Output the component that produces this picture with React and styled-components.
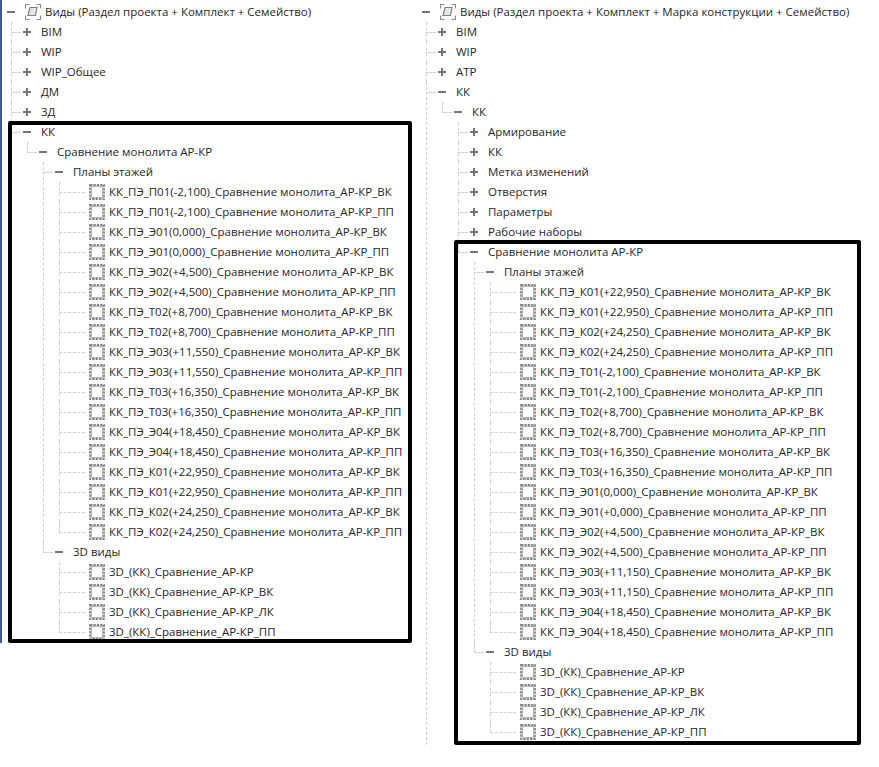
import React from 'react';
import styled, { createGlobalStyle } from 'styled-components';

const GlobalStyle = createGlobalStyle`
    html, body {
        margin: 0;
        padding: 0;
        background: #fff;
    }

    body {
        font-family: "Open Sans", "Noto Sans", sans-serif;
        font-size: 11.5px;
        color: #262626;
    }
`;

const Page = styled.div`
    display: flex;
    align-items: flex-start;
    width: 879px;
    height: 767px;
    overflow: hidden;
`;

const Column = styled.div`
    width: ${(p) => p.$width}px;
    padding: 2px 0 0 3px;
    box-sizing: border-box;
    flex-shrink: 0;
`;

const EdgeColumn = styled(Column)`
    height: 643px;
    padding-left: 1px;
    border-left: 2px solid #3d5a8a;
`;

const Branch = styled.div`
    padding-left: 16px;
`;

const Item = styled.div`
    position: relative;

    &::before {
        content: '';
        position: absolute;
        left: -8px;
        top: 0;
        height: ${(p) => p.$last ? (p.$open ? 'calc(100% + 3px)' : '11px') : '100%'};
        border-left: 1px dashed #cfcfcf;
    }
`;

const Row = styled.div`
    position: relative;
    display: flex;
    align-items: center;
    height: 20px;
    white-space: nowrap;
`;

const Connector = styled.span`
    position: absolute;
    left: -8px;
    top: 10px;
    width: ${(p) => p.$width}px;
    border-top: 1px dashed #cfcfcf;
`;

const Expander = styled.span`
    position: relative;
    width: 22px;
    height: 20px;
    flex-shrink: 0;

    &::before {
        content: '';
        position: absolute;
        left: 4px;
        top: 9px;
        width: 8px;
        height: 2px;
        background: #767676;
    }

    &::after {
        content: '';
        display: ${(p) => p.$open ? 'none' : 'block'};
        position: absolute;
        left: 7px;
        top: 6px;
        width: 2px;
        height: 8px;
        background: #767676;
    }
`;

const LeafGap = styled.span`
    width: 22px;
    flex-shrink: 0;
`;

const Label = styled.span`
    line-height: 20px;
`;

const IconSlot = styled.svg`
    display: block;
    flex-shrink: 0;
    width: 16px;
    height: 16px;
    margin-right: 4px;
`;

const Highlight = styled.div`
    position: relative;

    &::after {
        content: '';
        position: absolute;
        left: ${(p) => p.$left}px;
        top: ${(p) => p.$top}px;
        width: ${(p) => p.$width}px;
        height: ${(p) => p.$height}px;
        border: 4px solid #000;
        border-radius: 2px;
        box-sizing: border-box;
        pointer-events: none;
    }
`;

const ViewIcon = () => (
    <IconSlot viewBox="0 0 16 16">
        <rect x="1" y="1" width="14" height="14" fill="none" stroke="#858585" strokeWidth="1.8" strokeDasharray="2.4 1" />
        <rect x="2.5" y="2.5" width="11" height="11" fill="#fff" stroke="#b4b4b4" strokeWidth="1" />
    </IconSlot>
);

const RootIcon = () => (
    <IconSlot viewBox="0 0 16 16">
        <path d="M.5 4.5v-4h4M11.5.5h4v4M15.5 11.5v4h-4M4.5 15.5h-4v-4" fill="none" stroke="#8a8a8a" strokeWidth="1.2" />
        <path d="M5 3.5h7l-1.5 8h-7.5z" fill="#e6e6e6" stroke="#808080" strokeWidth="1.2" />
    </IconSlot>
);

const planNames = (levels) => levels.flatMap((level) =>
    ['ВК', 'ПП'].map((s) => `КК_ПЭ_${level}_Сравнение монолита_АР-КР_${s}`));

const views3d = ['3D_(КК)_Сравнение_АР-КР', '3D_(КК)_Сравнение_АР-КР_ВК', '3D_(КК)_Сравнение_АР-КР_ЛК', '3D_(КК)_Сравнение_АР-КР_ПП'];

const leftPlans = planNames([
    'П01(-2,100)', 'Э01(0,000)', 'Э02(+4,500)', 'Т02(+8,700)',
    'Э03(+11,550)', 'Т03(+16,350)', 'Э04(+18,450)', 'К01(+22,950)', 'К02(+24,250)',
]);

const rightPlans = [
    'КК_ПЭ_К01(+22,950)_Сравнение монолита_АР-КР_ВК',
    'КК_ПЭ_К01(+22,950)_Сравнение монолита_АР-КР_ПП',
    'КК_ПЭ_К02(+24,250)_Сравнение монолита_АР-КР_ВК',
    'КК_ПЭ_К02(+24,250)_Сравнение монолита_АР-КР_ПП',
    'КК_ПЭ_Т01(-2,100)_Сравнение монолита_АР-КР_ВК',
    'КК_ПЭ_Т01(-2,100)_Сравнение монолита_АР-КР_ПП',
    'КК_ПЭ_Т02(+8,700)_Сравнение монолита_АР-КР_ВК',
    'КК_ПЭ_Т02(+8,700)_Сравнение монолита_АР-КР_ПП',
    'КК_ПЭ_Т03(+16,350)_Сравнение монолита_АР-КР_ВК',
    'КК_ПЭ_Т03(+16,350)_Сравнение монолита_АР-КР_ПП',
    'КК_ПЭ_Э01(0,000)_Сравнение монолита_АР-КР_ВК',
    'КК_ПЭ_Э01(+0,000)_Сравнение монолита_АР-КР_ПП',
    'КК_ПЭ_Э02(+4,500)_Сравнение монолита_АР-КР_ВК',
    'КК_ПЭ_Э02(+4,500)_Сравнение монолита_АР-КР_ПП',
    'КК_ПЭ_Э03(+11,150)_Сравнение монолита_АР-КР_ВК',
    'КК_ПЭ_Э03(+11,150)_Сравнение монолита_АР-КР_ПП',
    'КК_ПЭ_Э04(+18,450)_Сравнение монолита_АР-КР_ВК',
    'КК_ПЭ_Э04(+18,450)_Сравнение монолита_АР-КР_ПП',
];

const group = (label, children, box) => ({ label, children, box });
const closed = (label) => ({ label, closed: true });
const leaves = (names) => names.map((label) => ({ label, leaf: true }));

const comparison = (plans, box) => group('Сравнение монолита АР-КР', [
    group('Планы этажей', leaves(plans)),
    group('3D виды', leaves(views3d)),
], box);

const NodeContent = ({ node }) => {
    if (node.leaf) {
        return (
            <Row>
                <Connector $width={26} />
                <LeafGap />
                <ViewIcon />
                <Label>{node.label}</Label>
            </Row>
        );
    }
    return (
        <>
            <Row>
                <Connector $width={10} />
                <Expander $open={!node.closed} />
                <Label>{node.label}</Label>
            </Row>
            {node.children && <Children items={node.children} />}
        </>
    );
};

const Children = ({ items, open }) => (
    <Branch>
        {items.map((node, i) => (
            <Item key={node.label} $last={i === items.length - 1} $open={open}>
                {node.box
                    ? <Highlight {...node.box}><NodeContent node={node} /></Highlight>
                    : <NodeContent node={node} />}
            </Item>
        ))}
    </Branch>
);

const Tree = ({ title, items, open }) => (
    <>
        <Row>
            <Expander $open />
            <RootIcon />
            <Label>{title}</Label>
        </Row>
        <Children items={items} open={open} />
    </>
);

const leftItems = [
    closed('BIM'), closed('WIP'), closed('WIP_Общее'), closed('ДМ'), closed('3Д'),
    group('КК', [comparison(leftPlans)], { $left: -11, $top: -1, $width: 404, $height: 522 }),
];

const rightItems = [
    closed('BIM'), closed('WIP'), closed('ATP'),
    group('КК', [
        group('КК', [
            closed('Армирование'), closed('КК'), closed('Метка изменений'), closed('Отверстия'), closed('Параметры'), closed('Рабочие наборы'),
            comparison(rightPlans, { $left: -12, $top: -2, $width: 407, $height: 505 }),
        ]),
    ]),
];

const App = () => (
    <>
        <GlobalStyle />
        <Page>
            <EdgeColumn $width={415}>
                <Tree title="Виды (Раздел проекта + Комплект + Семейство)" items={leftItems} />
            </EdgeColumn>
            <Column $width={464}>
                <Tree title="Виды (Раздел проекта + Комплект + Марка конструкции + Семейство)" items={rightItems} open />
            </Column>
        </Page>
    </>
);

export default App;
